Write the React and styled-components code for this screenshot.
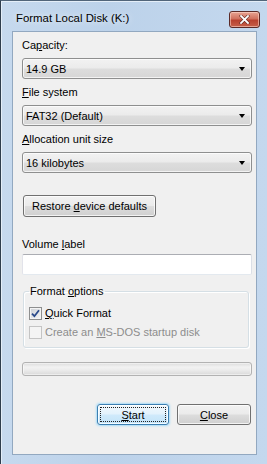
import React from "react";
import styled, { createGlobalStyle, css } from "styled-components";

const GlobalStyle = createGlobalStyle`
  html, body {
    margin: 0;
    padding: 0;
    background: #ffffff;
  }
  body {
    font-family: "Liberation Sans", Arial, sans-serif;
    font-size: 11px;
    color: #000;
  }
`;

const Window = styled.div`
  width: 267px;
  height: 464px;
  box-sizing: border-box;
  display: flex;
  flex-direction: column;
  background: linear-gradient(90deg, #c6d9ee 0%, #bcd2ea 40%, #c4d8ee 100%);
  border-left: 1px solid #2f3d4d;
  border-top: 1px solid #51657a;
  box-shadow: inset 1px 1px 0 #e4eef8;
  overflow: hidden;
`;

const TitleBar = styled.div`
  height: 30px;
  display: flex;
  align-items: center;
  padding: 0 7px 0 15px;
  box-sizing: border-box;
`;

const Title = styled.div`
  flex: 1;
  font-size: 11.4px;
  color: #000;
  padding-top: 8px;
  padding-bottom: 5px;
  text-shadow: 0 0 6px rgba(255, 255, 255, 0.9);
`;

const CloseButton = styled.div`
  width: 31px;
  height: 17px;
  box-sizing: border-box;
  margin-top: 6px;
  border: 1px solid #5b2a27;
  border-radius: 3px;
  background: linear-gradient(#e8a493 0%, #d1715e 45%, #b8412f 55%, #c6604a 100%);
  box-shadow: inset 0 0 0 1px rgba(255, 220, 210, 0.55);
  display: flex;
  align-items: center;
  justify-content: center;
`;

const Client = styled.div`
  flex: 1;
  margin: 0 10px 9px 11px;
  border: 1px solid #92a8c0;
  background: #f0f0f0;
  padding: 5px 4px 0 9px;
  display: flex;
  flex-direction: column;
`;

const Label = styled.div`
  line-height: 16px;
  height: 16px;
  margin-top: ${(p) => p.$mt || 0}px;
  margin-bottom: ${(p) => (p.$mb === undefined ? 5 : p.$mb)}px;
  white-space: nowrap;
`;

const Combo = styled.div`
  height: 21px;
  box-sizing: border-box;
  border: 1px solid #8e8f8f;
  border-radius: 3px;
  background: linear-gradient(#f2f2f2 0%, #ebebeb 48%, #dddddd 52%, #d6d6d6 100%);
  box-shadow: inset 0 0 0 1px rgba(255, 255, 255, 0.7);
  display: flex;
  align-items: center;
  padding: 0 5px 0 3px;
`;

const ComboText = styled.span`
  flex: 1;
  white-space: nowrap;
`;

const Arrow = styled.span`
  width: 0;
  height: 0;
  border-left: 3.5px solid transparent;
  border-right: 3.5px solid transparent;
  border-top: 4px solid #000;
  margin-right: 1px;
`;

const RestoreRow = styled.div`
  margin-top: 22px;
  padding-left: 1px;
  display: flex;
`;

const Button = styled.div`
  height: ${(p) => p.$h || 21}px;
  width: ${(p) => p.$w}px;
  box-sizing: border-box;
  border: 1px solid #707070;
  border-radius: 3px;
  background: linear-gradient(#f2f2f2 0%, #ebebeb 48%, #dddddd 52%, #cfcfcf 100%);
  box-shadow: inset 0 0 0 1px rgba(255, 255, 255, 0.75);
  display: flex;
  align-items: center;
  justify-content: center;
  white-space: nowrap;
  ${(p) =>
    p.$focused &&
    css`
      border-color: #3c7fb1;
      background: linear-gradient(#f1f8fd 0%, #e3f2fc 48%, #d0eafb 52%, #c2e3f8 100%);
      box-shadow: inset 0 0 0 1px rgba(255, 255, 255, 0.8), 0 0 2px 1px #a9dcf8;
    `}
`;

const FocusRing = styled.span`
  flex: 1;
  align-self: stretch;
  margin: 2px;
  border: 1px dotted #222;
  display: flex;
  align-items: center;
  justify-content: center;
`;

const TextBox = styled.div`
  height: 21px;
  box-sizing: border-box;
  background: #fff;
  border: 1px solid #e3e9ef;
  border-top-color: #abadb3;
  border-left-color: #e2e3ea;
  border-right-color: #dbdfe6;
  border-radius: 2px;
`;

const Group = styled.fieldset`
  margin: 8px 3px 0 1px;
  padding: 6px 5px 7px 5px;
  border: 1px solid #d5dfe5;
  border-radius: 3px;
  box-shadow: 1px 1px 0 #ffffff, inset 1px 1px 0 #ffffff;
  display: flex;
  flex-direction: column;
  gap: 3px;
`;

const Legend = styled.legend`
  padding: 0 2px 0 1px;
  line-height: 16px;
`;

const CheckRow = styled.div`
  display: flex;
  align-items: center;
  height: 16px;
  gap: 3px;
  color: ${(p) => (p.$disabled ? "#8d8d8d" : "#000")};
`;

const CheckBox = styled.span`
  width: 13px;
  height: 13px;
  box-sizing: border-box;
  border: 1px solid ${(p) => (p.$disabled ? "#c4c4c4" : "#8e8f8f")};
  background: ${(p) =>
    p.$disabled
      ? "#f4f4f4"
      : "linear-gradient(135deg, #cbcfd5 0%, #f6f6f6 100%)"};
  box-shadow: inset 0 0 0 1px #f4f4f4;
  display: flex;
  align-items: center;
  justify-content: center;
  margin-top: 1px;
`;

const Progress = styled.div`
  margin-top: 14px;
  height: 14px;
  box-sizing: border-box;
  border: 1px solid #b2b2b2;
  border-radius: 3px;
  background: linear-gradient(#dcdcdc 0%, #f2f2f2 35%, #ebebeb 60%, #d9d9d9 100%);
  box-shadow: inset 0 0 0 1px rgba(255, 255, 255, 0.5);
`;

const ButtonRow = styled.div`
  margin-top: 28px;
  display: flex;
  justify-content: flex-end;
  gap: 8px;
  padding-right: 1px;
`;

const CheckMark = () => (
  <svg width="9" height="9" viewBox="0 0 9 9">
    <path d="M1 4.6 L3.4 7.2 L8 1.2" fill="none" stroke="#2a4a8a" strokeWidth="1.8" />
  </svg>
);

const CloseX = () => (
  <svg width="11" height="9" viewBox="0 0 11 9">
    <path d="M2 1 L9 8 M9 1 L2 8" stroke="#5a2420" strokeWidth="3" strokeLinecap="square" />
    <path d="M2 1 L9 8 M9 1 L2 8" stroke="#ffffff" strokeWidth="1.8" strokeLinecap="square" />
  </svg>
);

const App = () => {
  return (
    <>
      <GlobalStyle />
      <Window>
        <TitleBar>
          <Title>Format Local Disk (K:)</Title>
          <CloseButton>
            <CloseX />
          </CloseButton>
        </TitleBar>
        <Client>
          <Label>
            Ca<u>p</u>acity:
          </Label>
          <Combo>
            <ComboText>14.9 GB</ComboText>
            <Arrow />
          </Combo>

          <Label $mt={5}>
            <u>F</u>ile system
          </Label>
          <Combo>
            <ComboText>FAT32 (Default)</ComboText>
            <Arrow />
          </Combo>

          <Label $mt={5}>
            <u>A</u>llocation unit size
          </Label>
          <Combo>
            <ComboText>16 kilobytes</ComboText>
            <Arrow />
          </Combo>

          <RestoreRow>
            <Button $w={133} $h={22}>
              <span>
                Restore <u>d</u>evice defaults
              </span>
            </Button>
          </RestoreRow>

          <Label $mt={19} $mb={2}>
            Volume <u>l</u>abel
          </Label>
          <TextBox />

          <Group>
            <Legend>
              Format <u>o</u>ptions
            </Legend>
            <CheckRow>
              <CheckBox>
                <CheckMark />
              </CheckBox>
              <span>
                <u>Q</u>uick Format
              </span>
            </CheckRow>
            <CheckRow $disabled>
              <CheckBox $disabled />
              <span>
                Create an <u>M</u>S-DOS startup disk
              </span>
            </CheckRow>
          </Group>

          <Progress />

          <ButtonRow>
            <Button $w={72} $focused>
              <FocusRing>
                <span>
                  <u>S</u>tart
                </span>
              </FocusRing>
            </Button>
            <Button $w={74}>
              <span>
                <u>C</u>lose
              </span>
            </Button>
          </ButtonRow>
        </Client>
      </Window>
    </>
  );
};

export default App;
